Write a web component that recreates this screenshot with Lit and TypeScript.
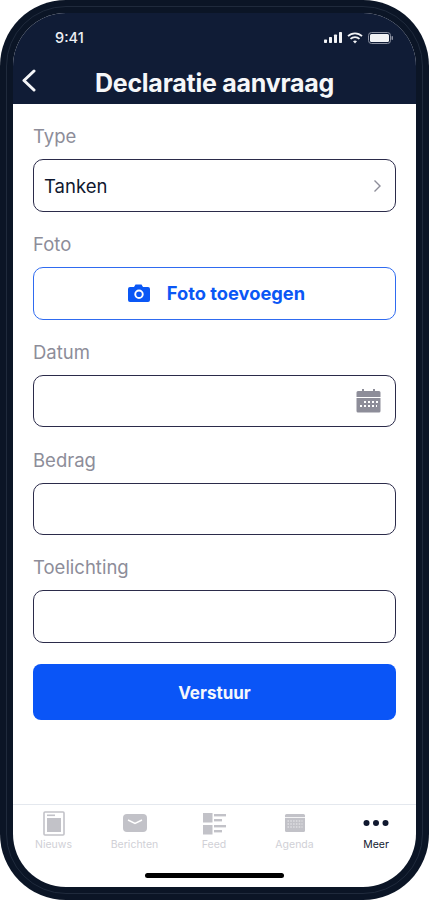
import { LitElement, html, css, svg } from "lit";
import { customElement } from "lit/decorators.js";

const tabs = [
  { label: "Nieuws", icon: svg`<svg width="22" height="25" viewBox="0 0 22 25"><rect x="1" y="1" width="20" height="23" rx="1" fill="none" stroke="#c2c2c8" stroke-width="1.600"/><rect x="4" y="7" width="14" height="14" fill="#c2c2c8"/><rect x="4" y="3.500" width="8" height="1.600" fill="#c2c2c8"/></svg>` },
  { label: "Berichten", icon: svg`<svg width="26" height="20" viewBox="0 0 26 20"><rect x="1" y="1" width="24" height="18" rx="4" fill="#c2c2c8"/><path d="M6 7l7 3.500L20 7" fill="none" stroke="#fff" stroke-width="1.500"/></svg>` },
  { label: "Feed", icon: svg`<svg width="25" height="23" viewBox="0 0 25 23" fill="#c2c2c8"><rect x="1" y="1" width="9.500" height="9.500"/><rect x="1" y="13" width="9.500" height="9.500"/><rect x="12" y="2" width="12" height="2.400"/><rect x="12" y="7" width="8" height="2.400"/><rect x="12" y="13" width="12" height="2.400"/><rect x="12" y="18" width="8" height="2.400"/></svg>` },
  { label: "Agenda", icon: svg`<svg width="22" height="20" viewBox="0 0 22 20"><rect x="1" y="1" width="20" height="18" rx="1.500" fill="#c2c2c8"/><path d="M1 4.500h20" stroke="#fff" stroke-width=".8"/><path d="M3.500 8h15M3.500 11h15M3.500 14h15" stroke="#eeeef0" stroke-width="1.200" stroke-dasharray="1.500 1.300"/></svg>` },
  { label: "Meer", active: true, icon: svg`<svg width="26" height="8" viewBox="0 0 26 8" fill="#10182f"><circle cx="3.500" cy="4" r="3"/><circle cx="13" cy="4" r="3"/><circle cx="22.500" cy="4" r="3"/></svg>` },
];

@customElement("app-root")
export class AppRoot extends LitElement {
  static styles = css`
    :host { display: block; width: 429px; height: 900px; font-family: Inter, "Liberation Sans", sans-serif; }
    * { box-sizing: border-box; }
    .phone { position: relative; width: 429px; height: 900px; padding: 13px; background: #0b1526; border-radius: 66px; }
    .phone::after { content: ""; position: absolute; inset: 6px; border: 1px solid #1f2a3c; border-radius: 60px; pointer-events: none; }
    .screen { height: 874px; background: #fff; border-radius: 53px; overflow: hidden; display: flex; flex-direction: column; }
    .head { height: 91px; background: #101c36; color: #fff; flex: none; }
    .status { height: 49px; padding: 0 22px 0 42px; display: flex; justify-content: space-between; align-items: center; }
    .time { font-size: 14.500px; font-weight: 500; color: #eef0f4; }
    .status-icons { display: flex; align-items: center; gap: 5px; }
    .nav { height: 42px; display: flex; align-items: center; position: relative; justify-content: center; }
    .back { position: absolute; left: 9px; top: 7px; display: block; }
    .title { font-size: 25px; font-weight: 700; letter-spacing: -0.25px; color: #f6f7f9; }
    .form { flex: 1; padding: 22.250px 20px 0; display: flex; flex-direction: column; }
    .label { height: 22px; line-height: 20px; font-size: 18.500px; color: #8d8d99; margin-bottom: 11px; }
    .box { height: 52.500px; border: 1px solid #2b2b4a; border-radius: 10px; margin-bottom: 22.250px; padding: 0 10px; display: flex; align-items: center; justify-content: space-between; font-size: 18.500px; color: #10182f; background: #fff; flex: none; }
    .box.photo { border-color: #2f6bf0; justify-content: center; gap: 17px; color: #0a57f5; font-weight: 700; font-size: 18.300px; padding: 0 0 0 4px; }
    .box.date { justify-content: flex-end; padding: 0 14px 2px 0; }
    .chev { margin-right: 3px; }
    .submit { height: 56px; padding-top: 2px; border-radius: 8px; background: #0a55f7; color: #f5f7fb; display: flex; align-items: center; justify-content: center; font-weight: 700; font-size: 17px; margin-top: -1px; flex: none; }
    .tabs { height: 83px; flex: none; border-top: 1px solid #e4e8ee; position: relative; display: grid; grid-template-columns: 81px 81px 78px 83px 80px; padding-top: 5px; align-items: start; }
    .tab { display: flex; flex-direction: column; align-items: center; font-size: 10.500px; color: #d0d0d6; height: 42px; }
    .tab.on { color: #10182f; }
    .ic { height: 26px; display: flex; align-items: center; justify-content: center; margin-bottom: 2px; }
    .home { position: absolute; left: 132px; bottom: 9px; width: 139px; height: 5px; background: #000; border-radius: 3px; }
  `;

  render() {
    return html`<div class="phone"><div class="screen">
      <div class="head">
        <div class="status">
          <span class="time">9:41</span>
          <span class="status-icons">
            <svg width="18" height="11" viewBox="0 0 18 11" fill="#f2f3f6"><rect x="0" y="7.500" width="3" height="3.500" rx=".7"/><rect x="5" y="5" width="3" height="6" rx=".7"/><rect x="10" y="2.500" width="3" height="8.500" rx=".7"/><rect x="15" y="0" width="3" height="11" rx=".7"/></svg>
            <svg width="16" height="12" viewBox="0 0 16 12" fill="none" stroke="#f2f3f6" stroke-width="1.800"><path d="M1 4.200a10 10 0 0 1 14 0"/><path d="M3.500 6.900a6.500 6.500 0 0 1 9 0"/><path d="M8 11.500l-2-2.200a3 3 0 0 1 4 0z" fill="#f2f3f6" stroke="none"/></svg>
            <svg width="26" height="12" viewBox="0 0 26 12"><rect x=".5" y=".5" width="22" height="11" rx="3" fill="none" stroke="#8b90a0"/><rect x="2" y="2" width="19" height="8" rx="1.500" fill="#f2f3f6"/><rect x="23.500" y="4" width="1.500" height="4" rx=".7" fill="#8b90a0"/></svg>
          </span>
        </div>
        <div class="nav">
          <svg class="back" width="14" height="23" viewBox="0 0 14 23" fill="none" stroke="#f4f5f8" stroke-width="3" stroke-linecap="round" stroke-linejoin="round"><path d="M12 2L2 11.500 12 21"/></svg>
          <span class="title">Declaratie aanvraag</span>
        </div>
      </div>
      <div class="form">
        <div class="label">Type</div>
        <div class="box"><span>Tanken</span>
          <svg class="chev" width="9" height="14" viewBox="0 0 9 14" fill="none" stroke="#8d8d99" stroke-width="1.400"><path d="M1.500 1.500L7 7l-5.500 5.500"/></svg>
        </div>
        <div class="label">Foto</div>
        <div class="box photo">
          <svg width="22" height="18" viewBox="0 0 22 18"><path fill="#0a57f5" fill-rule="evenodd" d="M2 3h4l1.500-2.500h6L15 3h5a2 2 0 0 1 2 2v11a2 2 0 0 1-2 2H2a2 2 0 0 1-2-2V5a2 2 0 0 1 2-2zM11 5.500a4.700 4.700 0 1 0 0 9.400 4.700 4.700 0 0 0 0-9.400zM11 7.500a2.800 2.800 0 1 1 0 5.600 2.800 2.800 0 0 1 0-5.600z"/></svg>
          <span>Foto toevoegen</span>
        </div>
        <div class="label">Datum</div>
        <div class="box date">
          <svg width="25" height="25" viewBox="0 0 25 25"><path fill="#8d8d99" d="M2 3h4V1h2v2h9V1h2v2h4a1.500 1.500 0 0 1 1.500 1.500V9H.500V4.500A1.500 1.500 0 0 1 2 3zM.500 10h24v13a1.500 1.500 0 0 1-1.500 1.500H2A1.500 1.500 0 0 1 .500 23z"/><path d="M8 14h14M4 18h17" stroke="#fff" stroke-width="2" stroke-dasharray="2 2"/></svg>
        </div>
        <div class="label">Bedrag</div>
        <div class="box"></div>
        <div class="label">Toelichting</div>
        <div class="box"></div>
        <div class="submit">Verstuur</div>
      </div>
      <div class="tabs">
        ${tabs.map((t) => html`<div class="tab ${t.active ? "on" : ""}"><span class="ic">${t.icon}</span><span>${t.label}</span></div>`)}
        <div class="home"></div>
      </div>
    </div></div>`;
  }
}
